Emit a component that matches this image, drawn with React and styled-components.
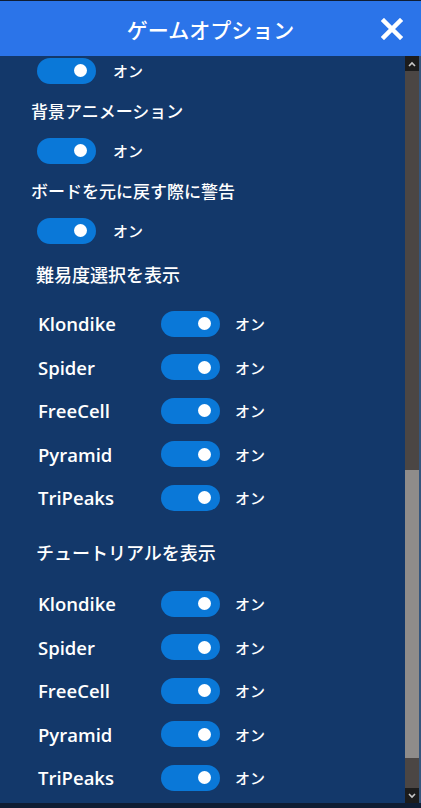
import React from 'react';
import styled, { createGlobalStyle } from 'styled-components';

const GlobalStyle = createGlobalStyle`
	html, body {
		margin: 0;
		padding: 0;
		background: #0f1d33;
	}
	body {
		font-family: 'Noto Sans CJK JP', 'Noto Sans', sans-serif;
		color: #ffffff;
	}
`;

const topOptions = [
	{ label: null },
	{ label: '背景アニメーション' },
	{ label: 'ボードを元に戻す際に警告' },
];

const games = ['Klondike', 'Spider', 'FreeCell', 'Pyramid', 'TriPeaks'];

const Toggle = () => (
	<Track>
		<Knob />
	</Track>
);

const App = () => {
	return (
		<>
			<GlobalStyle />
			<Window>
				<Header>
					<Title>ゲームオプション</Title>
					<CloseButton>
						<svg width="22" height="22" viewBox="0 0 22 22">
							<path d="M3 3 L19 19 M19 3 L3 19" stroke="#fff" strokeWidth="4.5" strokeLinecap="square" />
						</svg>
					</CloseButton>
				</Header>
				<Body>
					<Content>
						{topOptions.map((opt, i) => (
							<Block key={i}>
								{opt.label && <Label>{opt.label}</Label>}
								<ToggleRow>
									<Toggle />
									<OnText>オン</OnText>
								</ToggleRow>
							</Block>
						))}

						<Heading>難易度選択を表示</Heading>
						<GameList>
							{games.map((g) => (
								<GameRow key={g}>
									<GameName>{g}</GameName>
									<Toggle />
									<OnText $sub>オン</OnText>
								</GameRow>
							))}
						</GameList>

						<Heading $second>チュートリアルを表示</Heading>
						<GameList $second>
							{games.map((g) => (
								<GameRow key={g}>
									<GameName>{g}</GameName>
									<Toggle />
									<OnText $sub>オン</OnText>
								</GameRow>
							))}
						</GameList>
					</Content>
					<ScrollBar>
						<ScrollButton>
							<svg width="8" height="6" viewBox="0 0 8 6">
								<path d="M1 5 L4 2 L7 5" stroke="#c8c8c8" strokeWidth="1.6" fill="none" />
							</svg>
						</ScrollButton>
						<ScrollTrack>
							<ScrollThumb />
						</ScrollTrack>
						<ScrollButton>
							<svg width="8" height="6" viewBox="0 0 8 6">
								<path d="M1 1 L4 4 L7 1" stroke="#c8c8c8" strokeWidth="1.6" fill="none" />
							</svg>
						</ScrollButton>
					</ScrollBar>
				</Body>
				<Footer />
			</Window>
		</>
	);
};

export default App;

// Styles

const Window = styled.div`
	width: 421px;
	height: 808px;
	display: flex;
	flex-direction: column;
	background: #0f1d33;
	overflow: hidden;
`;

const Header = styled.div`
	height: 55px;
	margin-top: 1px;
	background-color: #2b74e9;
	display: flex;
	align-items: center;
	justify-content: center;
	position: relative;
	flex-shrink: 0;
`;

const Title = styled.h1`
	margin: 0;
	font-size: 21px;
	font-weight: 500;
	color: #fff;
`;

const CloseButton = styled.div`
	position: absolute;
	right: 18px;
	top: 17px;
	width: 22px;
	height: 22px;
	display: flex;
`;

const Body = styled.div`
	flex: 1;
	display: flex;
	background-color: #13386a;
	border-right: 2px solid #35557c;
	min-height: 0;
`;

const Content = styled.div`
	flex: 1;
	padding-left: 31px;
	display: flex;
	flex-direction: column;
`;

const Block = styled.div`
	display: flex;
	flex-direction: column;
	margin-top: 14px;
	&:first-child {
		margin-top: 1px;
	}
`;

const Label = styled.div`
	font-size: 17px;
	font-weight: 500;
	line-height: 26px;
	height: 26px;
	margin-bottom: 13px;
`;

const ToggleRow = styled.div`
	display: flex;
	align-items: center;
	gap: 17px;
	padding-left: 6px;
	height: 27px;
`;

const Track = styled.div`
	width: 59px;
	height: 26px;
	border-radius: 13px;
	background-color: #0a78d8;
	display: flex;
	align-items: center;
	justify-content: flex-end;
	padding-right: 9px;
	box-sizing: border-box;
	flex-shrink: 0;
`;

const Knob = styled.div`
	width: 13px;
	height: 13px;
	border-radius: 50%;
	background-color: #fff;
`;

const OnText = styled.span`
	font-size: 15px;
	font-weight: 500;
	margin-left: ${(p) => (p.$sub ? '-1px' : '0')};
`;

const Heading = styled.div`
	font-size: 18px;
	font-weight: 500;
	line-height: 26px;
	height: 26px;
	padding-left: 5px;
	margin-top: ${(p) => (p.$second ? '28px' : '17px')};
`;

const GameList = styled.div`
	display: flex;
	flex-direction: column;
	gap: 16.5px;
	margin-top: ${(p) => (p.$second ? '25px' : '23px')};
`;

const GameRow = styled.div`
	display: flex;
	align-items: center;
	height: 27px;
	padding-left: 7px;
	gap: 16px;
`;

const GameName = styled.span`
	font-family: 'Open Sans', 'Noto Sans', sans-serif;
	font-weight: 600;
	font-size: 18.5px;
	width: 107px;
`;

const ScrollBar = styled.div`
	width: 14px;
	display: flex;
	flex-direction: column;
	background-color: #4b4644;
`;

const ScrollButton = styled.div`
	height: 15px;
	background-color: #1c1c1c;
	display: flex;
	align-items: center;
	justify-content: center;
	flex-shrink: 0;
`;

const ScrollTrack = styled.div`
	flex: 1;
	display: flex;
	flex-direction: column;
	justify-content: flex-end;
	padding-bottom: 30px;
`;

const ScrollThumb = styled.div`
	height: 288px;
	background-color: #8f8c8a;
`;

const Footer = styled.div`
	height: 5px;
	background-color: #0f1d33;
	flex-shrink: 0;
`;
